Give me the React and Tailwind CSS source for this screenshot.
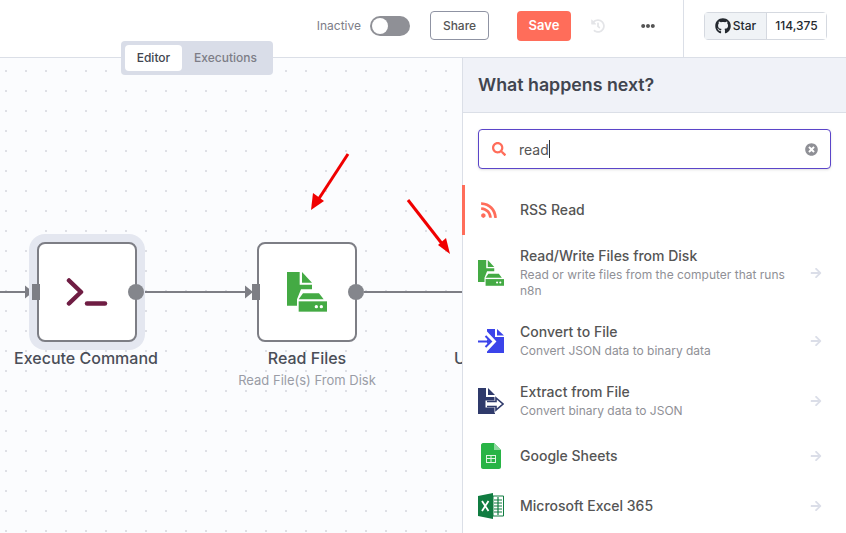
import {
  FaArrowRight,
  FaEllipsisH,
  FaGithub,
  FaHistory,
  FaRss,
  FaSearch,
  FaTimesCircle,
} from "react-icons/fa";

const ReadFilesIcon = ({ className }) => (
  <svg viewBox="0 0 120 120" className={className}>
    <path fill="#44aa44" d="M0 0H38V38H75V52H42L30 82V101H0Z" />
    <path fill="#44aa44" d="M45 0L75 32H45Z" />
    <path fill="#44aa44" d="M48 64H96L110 82H35Z" />
    <path fill="#44aa44" d="M35 88H120V119H35Z" />
    <circle cx="88" cy="104" r="5" fill="#fff" />
    <circle cx="103" cy="104" r="5" fill="#fff" />
  </svg>
);

const ConvertIcon = ({ className }) => (
  <svg viewBox="0 0 26 24" className={className}>
    <path fill="#3b44ea" d="M9 0H17V8H26V24H9Z" />
    <path fill="#3b44ea" d="M19 0L26 6.500H19Z" />
    <path fill="none" stroke="#fff" strokeWidth="5" d="M7 4L15 12.500L7 21" />
    <path fill="none" stroke="#3b44ea" strokeWidth="2" d="M0 12.500H13M7.500 7L13 12.500L7.500 18" />
  </svg>
);

const ExtractIcon = ({ className }) => (
  <svg viewBox="0 0 26 26" className={className}>
    <path fill="#2f3a6b" d="M0 0H8V9H17V26H0Z" />
    <path fill="#2f3a6b" d="M10 0L17 7H10Z" />
    <path fill="#fff" stroke="#fff" strokeWidth="3" d="M9 14H18V10L25 16L18 22V18H9Z" />
    <path fill="#fff" stroke="#2f3a6b" strokeWidth="1.600" strokeLinejoin="miter" d="M9 13.500H18V10L25 16L18 22V18.500H9" />
  </svg>
);

const SheetsIcon = ({ className }) => (
  <svg viewBox="0 0 20 26" className={className}>
    <path fill="#28b446" d="M2 0H13L20 7V24C20 25 19 26 18 26H2C1 26 0 25 0 24V2C0 1 1 0 2 0Z" />
    <path fill="#8ed9a0" d="M13 0L20 7H13Z" />
    <path fill="#fff" opacity="0.85" d="M5 12H15V20H5ZM6 13V15H9.500V13ZM10.500 13V15H14V13ZM6 16V19H9.500V16ZM10.500 16V19H14V16Z" fillRule="evenodd" />
  </svg>
);

const ExcelIcon = ({ className }) => (
  <svg viewBox="0 0 26 26" className={className}>
    <path fill="#107c41" d="M0 3L15 0V26L0 23Z" />
    <path fill="#fff" stroke="#107c41" strokeWidth="1" d="M15 3H25.500V23H15Z" />
    <path stroke="#107c41" strokeWidth="1.200" d="M16 7H24M16 10H24M16 13H24M16 16H24M16 19H24M20 4V22" />
    <path stroke="#fff" strokeWidth="1.800" fill="none" d="M4 8L10.500 18M10.500 8L4 18" />
  </svg>
);

const rows = [
  { Icon: ReadFilesIcon, size: "w-[26px] h-[26px]", title: "Read/Write Files from Disk", desc: "Read or write files from the computer that runs n8n", h: "h-[76px]" },
  { Icon: ConvertIcon, size: "w-[26px] h-6", title: "Convert to File", desc: "Convert JSON data to binary data", h: "h-[60px]" },
  { Icon: ExtractIcon, size: "w-[26px] h-[26px]", title: "Extract from File", desc: "Convert binary data to JSON", h: "h-[60px]" },
  { Icon: SheetsIcon, size: "w-5 h-[26px] ml-[3px] mr-[3px]", title: "Google Sheets", h: "h-[50px]" },
  { Icon: ExcelIcon, size: "w-[26px] h-[26px]", title: "Microsoft Excel 365", h: "h-[50px]" },
];

const Node = ({ className, children, highlight }) => (
  <div className={`absolute top-[184px] w-[100px] h-[100px] ${className}`}>
    {highlight && <div className="absolute -inset-2 rounded-2xl bg-[#e4e7f0]" />}
    <div className="absolute inset-0 rounded-lg border-2 border-[#7d7e85] bg-white flex items-center justify-center">
      {children}
    </div>
    <div className="absolute left-[-5px] top-[42px] w-2 h-4 bg-[#7d7e85]" />
    <div className="absolute right-[-7px] top-[42px] w-4 h-4 rounded-full bg-[#84868c]" />
  </div>
);

export default function App() {
  return (
    <div className="w-screen h-screen overflow-hidden flex flex-col bg-white font-['Inter',sans-serif] relative">
      {/* top bar */}
      <header className="h-[58px] shrink-0 flex items-center justify-end pb-[6px] border-b border-[#dbdfe7] bg-white">
        <span className="text-xs text-[#7d7d87] mr-[9px]">Inactive</span>
        <div className="w-10 h-5 rounded-full bg-[#8f9096] relative mr-5">
          <div className="absolute left-[2px] top-[2px] w-4 h-4 rounded-full bg-white" />
        </div>
        <button className="w-[59px] h-[29px] rounded border border-[#8f93a3] text-xs font-medium text-[#555] mr-7">
          Share
        </button>
        <button className="w-[54px] h-[30px] rounded bg-[#ff6d5a] text-white text-[13px] font-semibold mr-5">
          Save
        </button>
        <FaHistory className="w-[14px] h-[14px] text-[#e4e5e8] mr-[36px]" />
        <FaEllipsisH className="w-[14px] h-[14px] text-[#555] mr-[28px]" />
        <div className="w-px h-[57px] -mb-[6px] -mt-px bg-[#dbdfe7] mr-5" />
        <div className="flex h-7 rounded border border-[#d5d9e0] text-xs font-medium text-[#24292f] mr-[19px]">
          <div className="w-[62px] flex items-center justify-center gap-[2px] bg-[#f0f3f6] border-r border-[#d5d9e0]">
            <FaGithub className="w-4 h-4" />
            <span>Star</span>
          </div>
          <div className="w-[59px] flex items-center justify-center bg-white">114,375</div>
        </div>
      </header>

      <div className="flex-1 flex min-h-0 relative">
        {/* canvas */}
        <main className="flex-1 relative overflow-hidden bg-[#fbfcfe] bg-[radial-gradient(circle,#d3d5dc_0.6px,transparent_1px)] bg-[length:20px_20px] bg-[position:-4px_3px]">
          <svg className="absolute inset-0 w-full h-full" fill="none">
            <path d="M0 234H26M144 234H246M364 234H462" stroke="#7d7e85" strokeWidth="2" />
            <path d="M25 227.500L33 234L25 240.500Z M245 227.500L253 234L245 240.500Z" fill="#7d7e85" />
          </svg>

          <Node className="left-[37px]" highlight>
            <svg viewBox="0 0 42 28" className="w-[42px] h-7" fill="none" stroke="#6f1d43" strokeWidth="4.500" strokeLinecap="round" strokeLinejoin="round">
              <path d="M3 2.500L15 14L3 25.500" />
              <path d="M21 25.500H39" />
            </svg>
          </Node>
          <div className="absolute left-[-14px] w-[200px] top-[288px] text-center text-base font-medium text-[#4a4e58]">
            Execute Command
          </div>

          <Node className="left-[257px]">
            <ReadFilesIcon className="w-10 h-10" />
          </Node>
          <div className="absolute left-[207px] w-[200px] top-[288px] text-center text-base font-medium text-[#4a4e58]">
            Read Files
          </div>
          <div className="absolute left-[207px] w-[200px] top-[313px] text-center text-[13px] text-[#9a9ca6]">
            Read File(s) From Disk
          </div>
          <div className="absolute left-[454px] top-[288px] text-base font-medium text-[#4a4e58]">Upload</div>

          {/* red arrows */}
          <svg className="absolute inset-0 w-full h-full" fill="none">
            <path d="M348 96L318 142" stroke="#f00000" strokeWidth="3" />
            <path d="M311 152L313 135L324 143Z" fill="#f00000" />
            <path d="M408 142L443 187" stroke="#f00000" strokeWidth="3" />
            <path d="M450 196L438 187L446 180Z" fill="#f00000" />
          </svg>
        </main>

        {/* node creator panel */}
        <aside className="w-[384px] shrink-0 absolute right-0 top-0 bottom-0 bg-white border-l border-[#dbdfe7] flex flex-col">
          <div className="h-[55px] shrink-0 flex items-center pl-[15px] bg-[#f0f2f8] border-b border-[#dbdfe7] text-[17.800px] font-semibold text-[#41454f]">
            What happens next?
          </div>
          <div className="px-[15px] pt-4 pb-4">
            <div className="h-10 flex items-center rounded border border-[#5b45c9] shadow-sm pl-[13px] pr-[12px] bg-white">
              <FaSearch className="w-[14px] h-[14px] text-[#ff6d5a] mr-[13px]" />
              <span className="text-sm text-[#555] pt-[2px]">read</span>
              <span className="w-px h-[18px] bg-[#333]" />
              <FaTimesCircle className="w-[13px] h-[13px] text-[#8f9096] ml-auto" />
            </div>
          </div>
          <div className="relative h-[50px] flex items-center pl-[17px]">
            <div className="absolute -left-px top-0 bottom-0 w-[3px] bg-[#ff6d5a]" />
            <FaRss className="w-[18px] h-[18px] text-[#ff6d5a] mr-[22px]" />
            <span className="text-sm font-medium text-[#555]">RSS Read</span>
          </div>
          {rows.map((r) => (
            <div key={r.title} className={`${r.h} flex items-center pl-[15px] pr-6`}>
              <r.Icon className={`${r.size} shrink-0`} />
              <div className={r.desc ? "ml-4 flex-1 min-w-0 pb-[2px]" : "ml-4 flex-1 min-w-0"}>
                <div className="text-sm font-medium text-[#555]">{r.title}</div>
                {r.desc && <div className="mt-px text-xs leading-4 text-[#8f9096] pr-2">{r.desc}</div>}
              </div>
              <FaArrowRight className="w-3 h-3 text-[#dbdee8] ml-2 shrink-0" />
            </div>
          ))}
        </aside>

        {/* Editor / Executions tabs */}
        <div className="absolute left-[121px] top-[-17px] w-[152px] h-[34px] rounded bg-[#d9dde8] flex items-center p-1">
          <div className="w-[57px] h-[26px] rounded bg-white flex items-center justify-center text-xs font-medium text-[#41454f]">
            Editor
          </div>
          <div className="flex-1 text-center text-xs font-medium text-[#7d7d87]">Executions</div>
        </div>
      </div>
    </div>
  );
}
